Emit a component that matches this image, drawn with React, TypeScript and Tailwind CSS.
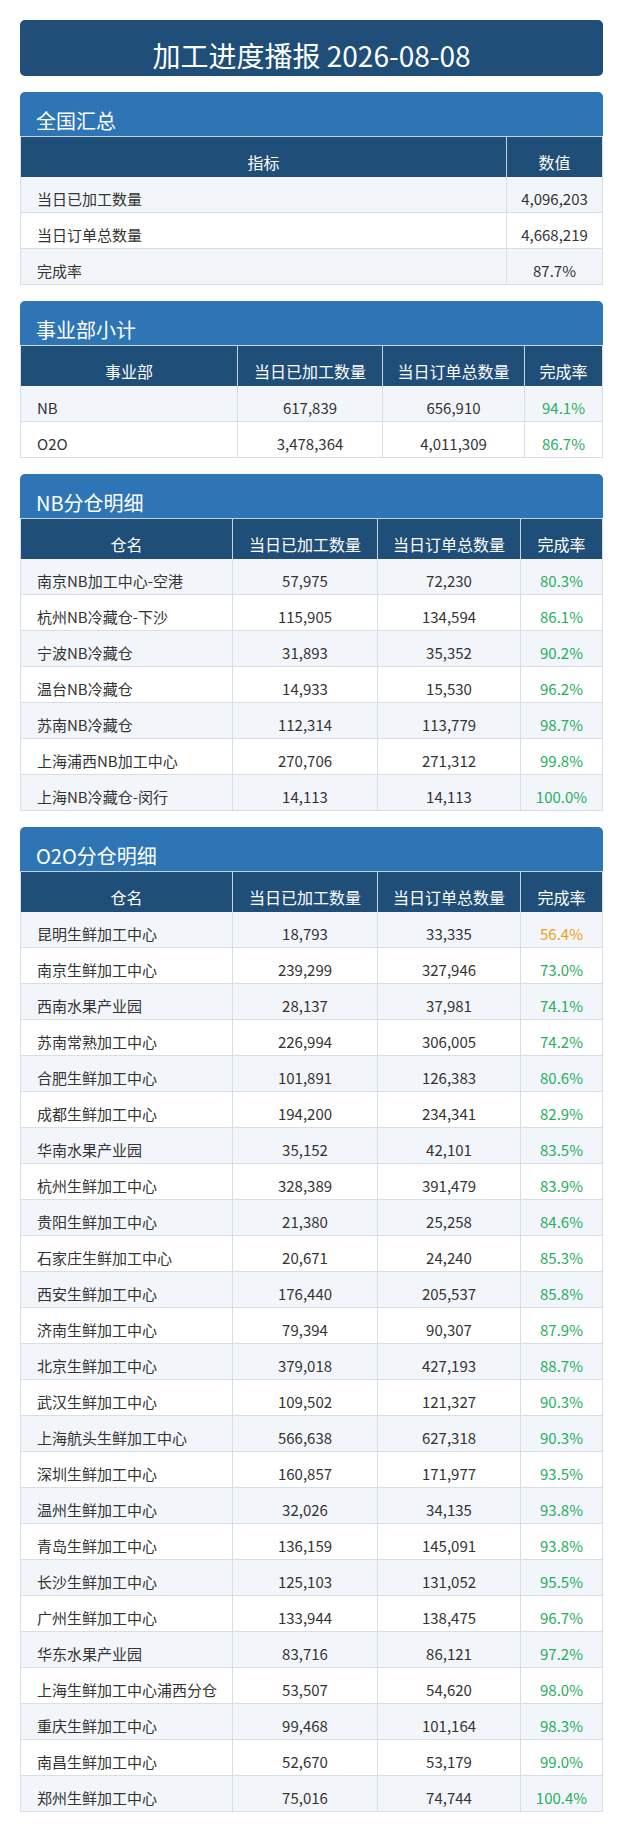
const font = { fontFamily: '"Noto Sans CJK SC", "Noto Sans", sans-serif' };

type Row = [string, string, string, string];

const summary: [string, string][] = [
  ["当日已加工数量", "4,096,203"],
  ["当日订单总数量", "4,668,219"],
  ["完成率", "87.7%"],
];

const divisions: Row[] = [
  ["NB", "617,839", "656,910", "94.1%"],
  ["O2O", "3,478,364", "4,011,309", "86.7%"],
];

const nbRows: Row[] = [
  ["南京NB加工中心-空港", "57,975", "72,230", "80.3%"],
  ["杭州NB冷藏仓-下沙", "115,905", "134,594", "86.1%"],
  ["宁波NB冷藏仓", "31,893", "35,352", "90.2%"],
  ["温台NB冷藏仓", "14,933", "15,530", "96.2%"],
  ["苏南NB冷藏仓", "112,314", "113,779", "98.7%"],
  ["上海浦西NB加工中心", "270,706", "271,312", "99.8%"],
  ["上海NB冷藏仓-闵行", "14,113", "14,113", "100.0%"],
];

const o2oRows: Row[] = [
  ["昆明生鲜加工中心", "18,793", "33,335", "56.4%"],
  ["南京生鲜加工中心", "239,299", "327,946", "73.0%"],
  ["西南水果产业园", "28,137", "37,981", "74.1%"],
  ["苏南常熟加工中心", "226,994", "306,005", "74.2%"],
  ["合肥生鲜加工中心", "101,891", "126,383", "80.6%"],
  ["成都生鲜加工中心", "194,200", "234,341", "82.9%"],
  ["华南水果产业园", "35,152", "42,101", "83.5%"],
  ["杭州生鲜加工中心", "328,389", "391,479", "83.9%"],
  ["贵阳生鲜加工中心", "21,380", "25,258", "84.6%"],
  ["石家庄生鲜加工中心", "20,671", "24,240", "85.3%"],
  ["西安生鲜加工中心", "176,440", "205,537", "85.8%"],
  ["济南生鲜加工中心", "79,394", "90,307", "87.9%"],
  ["北京生鲜加工中心", "379,018", "427,193", "88.7%"],
  ["武汉生鲜加工中心", "109,502", "121,327", "90.3%"],
  ["上海航头生鲜加工中心", "566,638", "627,318", "90.3%"],
  ["深圳生鲜加工中心", "160,857", "171,977", "93.5%"],
  ["温州生鲜加工中心", "32,026", "34,135", "93.8%"],
  ["青岛生鲜加工中心", "136,159", "145,091", "93.8%"],
  ["长沙生鲜加工中心", "125,103", "131,052", "95.5%"],
  ["广州生鲜加工中心", "133,944", "138,475", "96.7%"],
  ["华东水果产业园", "83,716", "86,121", "97.2%"],
  ["上海生鲜加工中心浦西分仓", "53,507", "54,620", "98.0%"],
  ["重庆生鲜加工中心", "99,468", "101,164", "98.3%"],
  ["南昌生鲜加工中心", "52,670", "53,179", "99.0%"],
  ["郑州生鲜加工中心", "75,016", "74,744", "100.4%"],
];

function rateColor(v: string) {
  return parseFloat(v) < 60 ? "text-[#f39c12]" : "text-[#27ae60]";
}

function Section({ title, children }: { title: string; children: React.ReactNode }) {
  return (
    <div>
      <div className="h-11 rounded-t-[5px] bg-[#2e75b6] px-4 pt-[17px] text-[20px] leading-6 text-white">
        {title}
      </div>
      <div className="border-x border-[#d6dee8]">{children}</div>
    </div>
  );
}

const headCell =
  "h-10 border-r border-[#c9d3de] pt-[13px] text-center text-[16px] leading-6 text-white last:border-r-0";
const bodyCell =
  "h-9 border-b border-r border-[#d6dee8] pt-[11px] text-[15px] leading-[22px] last:border-r-0";

function Table({ cols, head, rows }: { cols: string; head: string[]; rows: Row[] }) {
  return (
    <>
      <div className={`grid ${cols} border-t border-[#c9d3de] bg-[#1f4e79]`}>
        {head.map((h) => (
          <div key={h} className={headCell}>
            {h}
          </div>
        ))}
      </div>
      {rows.map((r, i) => (
        <div key={r[0]} className={`grid ${cols} ${i % 2 === 0 ? "bg-[#f2f6fa]" : "bg-white"}`}>
          <div className={`${bodyCell} pl-4 text-[#333]`}>{r[0]}</div>
          <div className={`${bodyCell} text-center text-[#333]`}>{r[1]}</div>
          <div className={`${bodyCell} text-center text-[#333]`}>{r[2]}</div>
          <div className={`${bodyCell} text-center ${rateColor(r[3])}`}>{r[3]}</div>
        </div>
      ))}
    </>
  );
}

export default function App() {
  return (
    <div className="min-h-screen bg-white px-5 pt-5 pb-5" style={font}>
      {/* Title */}
      <div className="h-14 rounded-[5px] bg-[#1f4e79] pt-[20px] text-center text-[28px] leading-[30px] text-white">
        加工进度播报 2026-08-08
      </div>

      <div className="mt-4 flex flex-col gap-4">
        <Section title="全国汇总">
          <div className="grid grid-cols-[486px_1fr] border-t border-[#c9d3de] bg-[#1f4e79]">
            <div className={headCell}>指标</div>
            <div className={headCell}>数值</div>
          </div>
          {summary.map(([k, v], i) => (
            <div key={k} className={`grid grid-cols-[486px_1fr] ${i % 2 === 0 ? "bg-[#f2f6fa]" : "bg-white"}`}>
              <div className={`${bodyCell} pl-4 text-[#333]`}>{k}</div>
              <div className={`${bodyCell} text-center text-[#333]`}>{v}</div>
            </div>
          ))}
        </Section>

        <Section title="事业部小计">
          <Table
            cols="grid-cols-[217px_145px_142px_1fr]"
            head={["事业部", "当日已加工数量", "当日订单总数量", "完成率"]}
            rows={divisions}
          />
        </Section>

        <Section title="NB分仓明细">
          <Table
            cols="grid-cols-[212px_145px_143px_1fr]"
            head={["仓名", "当日已加工数量", "当日订单总数量", "完成率"]}
            rows={nbRows}
          />
        </Section>

        <Section title="O2O分仓明细">
          <Table
            cols="grid-cols-[212px_145px_143px_1fr]"
            head={["仓名", "当日已加工数量", "当日订单总数量", "完成率"]}
            rows={o2oRows}
          />
        </Section>
      </div>
    </div>
  );
}
